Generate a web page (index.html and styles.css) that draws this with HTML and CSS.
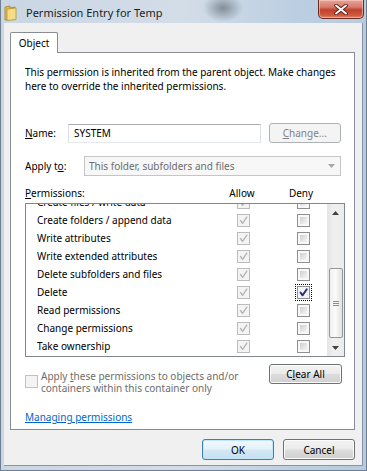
FILE: index.html
```html
<!DOCTYPE html>
<html lang="en">
<head>
  <meta charset="UTF-8">
  <meta name="viewport" content="width=device-width, initial-scale=1">
  <title>Permission Entry for Temp</title>
  <link rel="stylesheet" href="styles.css">
</head>
<body>
  <div class="window">
    <div class="titlebar">
      <svg class="folder-icon" width="13" height="16" viewBox="0 0 13 16">
        <path d="M1 2 L6 1 L6 3 L11 2 L11 14 L1 15 Z" fill="#e6b94a" stroke="#a9822a" stroke-width="0.8"/>
        <path d="M3 4 L12 3 L12 14.5 L3 15.5 Z" fill="#f7dc86" stroke="#b8902f" stroke-width="0.8"/>
      </svg>
      <span class="title">Permission Entry for Temp</span>
      <div class="close-btn">
        <svg width="14" height="11" viewBox="0 0 14 11">
          <path d="M2 1.5 L12 9.5 M12 1.5 L2 9.5" stroke="#5a1a10" stroke-width="3.6" stroke-linecap="round"/>
          <path d="M2 1.5 L12 9.5 M12 1.5 L2 9.5" stroke="#fff" stroke-width="2" stroke-linecap="round"/>
        </svg>
      </div>
    </div>

    <div class="client">
      <div class="tabs">
        <div class="tab">Object</div>
      </div>

      <div class="panel">
        <p class="info">This permission is inherited from the parent object. Make changes<br>here to override the inherited permissions.</p>

        <div class="field-row">
          <label class="field-label name-label"><u>N</u>ame:</label>
          <div class="textbox">SYSTEM</div>
          <button class="btn btn-disabled change-btn" disabled><u>C</u>hange...</button>
        </div>

        <div class="field-row apply-row">
          <label class="field-label apply-label">Apply t<u>o</u>:</label>
          <div class="combo">
            <span>This folder, subfolders and files</span>
            <svg class="combo-arrow" width="7" height="4" viewBox="0 0 7 4"><path d="M0 0 L7 0 L3.5 4 Z" fill="#a6a6a6"/></svg>
          </div>
        </div>

        <div class="perm-header">
          <span class="perm-title"><u>P</u>ermissions:</span>
          <span class="col-head">Allow</span>
          <span class="col-head deny-head">Deny</span>
        </div>

        <div class="perm-list">
          <div class="perm-rows">
            <div class="perm-row"><span class="perm-name">Create files / write data</span><span class="cb cb-allow"><svg viewBox="0 0 11 11"><path d="M2.5 5.5 L4.6 8.3 L8.8 2.2"/></svg></span><span class="cb cb-deny"></span></div>
            <div class="perm-row"><span class="perm-name">Create folders / append data</span><span class="cb cb-allow"><svg viewBox="0 0 11 11"><path d="M2.5 5.5 L4.6 8.3 L8.8 2.2"/></svg></span><span class="cb cb-deny"></span></div>
            <div class="perm-row"><span class="perm-name">Write attributes</span><span class="cb cb-allow"><svg viewBox="0 0 11 11"><path d="M2.5 5.5 L4.6 8.3 L8.8 2.2"/></svg></span><span class="cb cb-deny"></span></div>
            <div class="perm-row"><span class="perm-name">Write extended attributes</span><span class="cb cb-allow"><svg viewBox="0 0 11 11"><path d="M2.5 5.5 L4.6 8.3 L8.8 2.2"/></svg></span><span class="cb cb-deny"></span></div>
            <div class="perm-row"><span class="perm-name">Delete subfolders and files</span><span class="cb cb-allow"><svg viewBox="0 0 11 11"><path d="M2.5 5.5 L4.6 8.3 L8.8 2.2"/></svg></span><span class="cb cb-deny"></span></div>
            <div class="perm-row"><span class="perm-name">Delete</span><span class="cb cb-allow"><svg viewBox="0 0 11 11"><path d="M2.5 5.5 L4.6 8.3 L8.8 2.2"/></svg></span><span class="cb cb-deny cb-checked"><svg viewBox="0 0 11 11"><path d="M2.5 5.5 L4.6 8.3 L8.8 2.2"/></svg></span></div>
            <div class="perm-row"><span class="perm-name">Read permissions</span><span class="cb cb-allow"><svg viewBox="0 0 11 11"><path d="M2.5 5.5 L4.6 8.3 L8.8 2.2"/></svg></span><span class="cb cb-deny"></span></div>
            <div class="perm-row"><span class="perm-name">Change permissions</span><span class="cb cb-allow"><svg viewBox="0 0 11 11"><path d="M2.5 5.5 L4.6 8.3 L8.8 2.2"/></svg></span><span class="cb cb-deny"></span></div>
            <div class="perm-row"><span class="perm-name">Take ownership</span><span class="cb cb-allow"><svg viewBox="0 0 11 11"><path d="M2.5 5.5 L4.6 8.3 L8.8 2.2"/></svg></span><span class="cb cb-deny"></span></div>
          </div>
          <div class="scrollbar">
            <div class="sb-arrow"><svg width="7" height="4" viewBox="0 0 7 4"><path d="M0 4 L7 4 L3.5 0 Z" fill="#404040"/></svg></div>
            <div class="sb-track">
              <div class="sb-thumb"><span class="grip"></span><span class="grip"></span><span class="grip"></span></div>
            </div>
            <div class="sb-arrow"><svg width="7" height="4" viewBox="0 0 7 4"><path d="M0 0 L7 0 L3.5 4 Z" fill="#404040"/></svg></div>
          </div>
        </div>

        <div class="bottom-row">
          <div class="apply-check">
            <span class="cb cb-off"></span>
            <span class="apply-text">Apply <u>t</u>hese permissions to objects and/or<br>containers within this container only</span>
          </div>
          <button class="btn clear-btn">C<u>l</u>ear All</button>
        </div>

        <a class="help-link" href="#">Managing permissions</a>
      </div>

      <div class="dialog-buttons">
        <button class="btn btn-default">OK</button>
        <button class="btn">Cancel</button>
      </div>
    </div>
  </div>
</body>
</html>
```

FILE: styles.css
```css
body {
  margin: 0;
  font-family: 'Noto Sans', sans-serif;
  font-size: 10px;
  line-height: 14px;
  color: #000;
  background: #fff;
}
.window {
  width: 367px;
  height: 471px;
  box-sizing: border-box;
  padding: 0 3px 4px 3px;
  display: flex;
  flex-direction: column;
  background:
    radial-gradient(ellipse 20px 14px at 222px 8px, rgba(70,80,90,0.55), rgba(70,80,90,0) 100%),
    linear-gradient(90deg, #c9d6e3 0%, #d3dde8 50%, #bccfe2 80%, #b7cbe0 100%);
  border: 1px solid #6f7f91;
  border-top: none;
}
.titlebar {
  height: 23px;
  display: flex;
  align-items: center;
  flex-shrink: 0;
}
.folder-icon {
  margin-left: 0;
  margin-top: 2px;
}
.title {
  margin-left: 9px;
  margin-top: 2px;
  font-size: 11px;
  color: #1e1e1e;
}
.close-btn {
  margin-left: auto;
  margin-right: -1px;
  align-self: flex-start;
  width: 46px;
  height: 19px;
  box-sizing: border-box;
  border: 1px solid #6b2a20;
  border-top: none;
  border-radius: 0 0 5px 5px;
  background: linear-gradient(#e7a597 0%, #d6786a 40%, #c1402a 55%, #cc5a3f 85%, #e0876a 100%);
  box-shadow: inset 0 0 0 1px rgba(255,220,210,0.5);
  display: flex;
  align-items: center;
  justify-content: center;
}
.client {
  flex: 1;
  background: #f0f0f0;
  padding: 9px 7px 0 6px;
  border: 1px solid #8596a8;
  border-width: 0 1px 1px 0;
}
.tabs {
  display: flex;
  height: 20px;
  position: relative;
  z-index: 1;
}
.tab {
  width: 48px;
  height: 21px;
  box-sizing: border-box;
  border: 1px solid #898c95;
  border-bottom: none;
  border-radius: 2px 2px 0 0;
  background: #fff;
  text-align: center;
  line-height: 19px;
  padding-top: 1px;
}
.panel {
  height: 378px;
  box-sizing: border-box;
  border: 1px solid #898c95;
  background: #fff;
  padding: 12px 13px 0 14px;
}
.info {
  margin: 0;
  white-space: nowrap;
}
.field-row {
  display: flex;
  align-items: center;
  height: 20px;
  margin-top: 30px;
}
.apply-row {
  margin-top: 13px;
}
.field-label {
  flex-shrink: 0;
}
.name-label {
  width: 43px;
}
.apply-label {
  width: 59px;
}
.textbox {
  width: 194px;
  height: 19px;
  box-sizing: border-box;
  border: 1px solid #dbdfe6;
  border-top-color: #abadb3;
  border-bottom-color: #e3e9ef;
  padding-left: 5px;
  line-height: 17px;
}
.btn {
  font-family: 'Noto Sans', sans-serif;
  font-size: 10px;
  height: 21px;
  width: 73px;
  box-sizing: border-box;
  padding: 0;
  border: 1px solid #707070;
  border-radius: 3px;
  color: #000;
  background: linear-gradient(#f3f3f3 0%, #ebebeb 48%, #dddddd 52%, #cfcfcf 100%);
  box-shadow: inset 0 0 0 1px #fcfcfc;
}
.change-btn {
  height: 20px;
  margin-left: 8px;
}
.btn-disabled {
  border-color: #adb2b5;
  background: #f4f4f4;
  color: #838383;
  box-shadow: none;
}
.combo {
  width: 260px;
  height: 20px;
  box-sizing: border-box;
  border: 1px solid #c5c5c5;
  background: #f7f7f7;
  color: #6d6d6d;
  display: flex;
  align-items: center;
  padding-left: 4px;
}
.combo-arrow {
  margin-left: auto;
  margin-right: 5px;
}
.perm-header {
  display: flex;
  height: 14px;
  margin-top: 10px;
}
.perm-title {
  width: 197px;
}
.col-head {
  width: 40px;
  text-align: center;
}
.deny-head {
  margin-left: 19px;
}
.perm-list {
  width: 320px;
  height: 154px;
  box-sizing: border-box;
  margin-top: 3px;
  border: 1px solid #828790;
  display: flex;
  overflow: hidden;
}
.perm-rows {
  width: 302px;
  margin-top: -11px;
}
.perm-row {
  height: 18px;
  display: flex;
  align-items: center;
  padding-left: 11px;
}
.perm-name {
  width: 200px;
  white-space: nowrap;
}
.cb {
  width: 13px;
  height: 13px;
  box-sizing: border-box;
  flex-shrink: 0;
  display: flex;
  align-items: center;
  justify-content: center;
}
.cb svg {
  width: 11px;
  height: 11px;
}
.cb path {
  fill: none;
  stroke-width: 1.4;
  stroke-linecap: round;
  stroke-linejoin: round;
}
.cb-allow {
  border: 1px solid #bcbcbc;
  background: #f4f4f4;
}
.cb-allow path {
  stroke: #b5b5b5;
}
.cb-deny {
  margin-left: 47px;
  border: 1px solid #8f8f8f;
  padding: 2px;
  background: linear-gradient(135deg, #cfcfcf, #f6f6f6) content-box, #f8f8f8;
}
.cb-checked {
  padding: 0;
  background: #f4f4f6;
  outline: 1px dotted #000;
  outline-offset: 1px;
}
.cb-checked path {
  stroke: #2a2e78;
  stroke-width: 2;
}
.scrollbar {
  width: 17px;
  display: flex;
  flex-direction: column;
  background: linear-gradient(90deg, #e4e4e4, #f0f0f0 40%, #ececec);
}
.sb-arrow {
  height: 17px;
  display: flex;
  align-items: center;
  justify-content: center;
}
.sb-track {
  flex: 1;
}
.sb-thumb {
  margin: 47px 1px 0 2px;
  height: 70px;
  box-sizing: border-box;
  border: 1px solid #979797;
  border-radius: 2px;
  background: linear-gradient(90deg, #f0f0f0, #fafafa 45%, #e2e2e2);
  display: flex;
  flex-direction: column;
  align-items: center;
  justify-content: center;
  gap: 1px;
}
.grip {
  width: 6px;
  height: 1px;
  background: #8a8a8a;
}
.bottom-row {
  display: flex;
  align-items: flex-start;
  justify-content: space-between;
  margin-top: 7px;
  height: 30px;
}
.apply-check {
  display: flex;
  align-items: flex-start;
  margin-top: 6px;
  color: #6d6d6d;
}
.cb-off {
  margin-top: 5px;
  border: 1px solid #c2c2c2;
  background: #f4f4f4;
}
.apply-text {
  margin-left: 3px;
  line-height: 12px;
  white-space: nowrap;
}
.clear-btn {
  height: 20px;
  margin-right: -1px;
}
.help-link {
  display: inline-block;
  margin-top: 16px;
  color: #0066cc;
  text-decoration: underline;
}
.dialog-buttons {
  display: flex;
  justify-content: flex-end;
  gap: 9px;
  margin-top: 9px;
}
.dialog-buttons .btn {
  width: 72px;
}
.btn-default {
  border-color: #3c7fb1;
  background: linear-gradient(#f1f8fd 0%, #e6f2fa 48%, #d4e8f5 52%, #c6e0f2 100%);
  box-shadow: inset 0 0 0 1px #c0e6fa;
}
```
